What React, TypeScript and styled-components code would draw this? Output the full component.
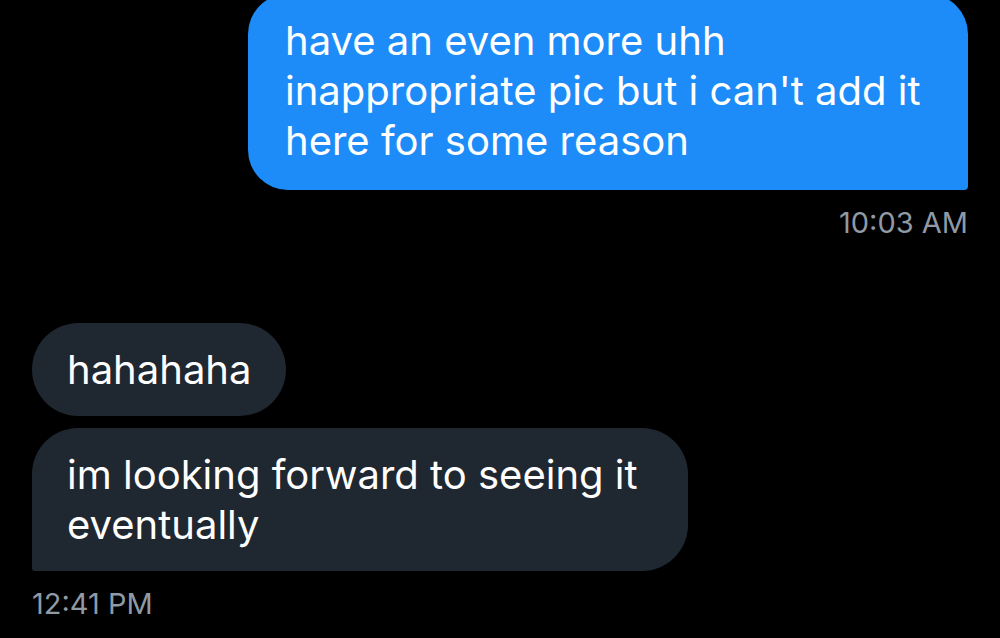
import styled, { createGlobalStyle } from 'styled-components';

const GlobalStyle = createGlobalStyle`
  html, body {
    margin: 0;
    padding: 0;
    background: #000000;
  }
  body {
    font-family: Inter, "Noto Sans", "Liberation Sans", sans-serif;
    -webkit-font-smoothing: antialiased;
  }
`;

type Side = 'out' | 'in';

function App() {
  return (
    <Thread>
      <GlobalStyle />
      <Group $side="out">
        <Bubble $side="out" $tail>
          have an even more uhh inappropriate pic but i can't add it here for some reason
        </Bubble>
        <Time>10:03 AM</Time>
      </Group>

      <Group $side="in">
        <Bubble $side="in">hahahaha</Bubble>
        <Bubble $side="in" $tail>
          im looking forward to seeing it eventually
        </Bubble>
        <Time>12:41 PM</Time>
      </Group>
    </Thread>
  );
}

export default App;

const Thread = styled.div`
  width: 1000px;
  height: 638px;
  overflow: hidden;
  box-sizing: border-box;
  padding: 0 32px;
  display: flex;
  flex-direction: column;
  gap: 83px;
  background: #000000;

  & > :first-child {
    margin-top: -6px;
  }
`;

const Group = styled.div<{ $side: Side }>`
  display: flex;
  flex-direction: column;
  align-items: ${(p) => (p.$side === 'out' ? 'flex-end' : 'flex-start')};
  gap: 12px;
`;

const Bubble = styled.div<{ $side: Side; $tail?: boolean }>`
  max-width: ${(p) => (p.$side === 'out' ? '720px' : '656px')};
  box-sizing: border-box;
  padding: ${(p) => (p.$side === 'out' ? '22px 37px 24px' : '21.5px 35px')};
  font-size: 40px;
  line-height: 50px;
  color: #ffffff;
  background: ${(p) => (p.$side === 'out' ? '#1d8cf8' : '#1f2730')};
  border-radius: ${(p) => {
    if (!p.$tail) return '47px';
    return p.$side === 'out' ? '40px 40px 4px 40px' : '46px 46px 46px 3px';
  }};
`;

const Time = styled.div`
  margin-top: 4px;
  font-size: 29px;
  line-height: 34px;
  color: #8f9aa5;
`;
